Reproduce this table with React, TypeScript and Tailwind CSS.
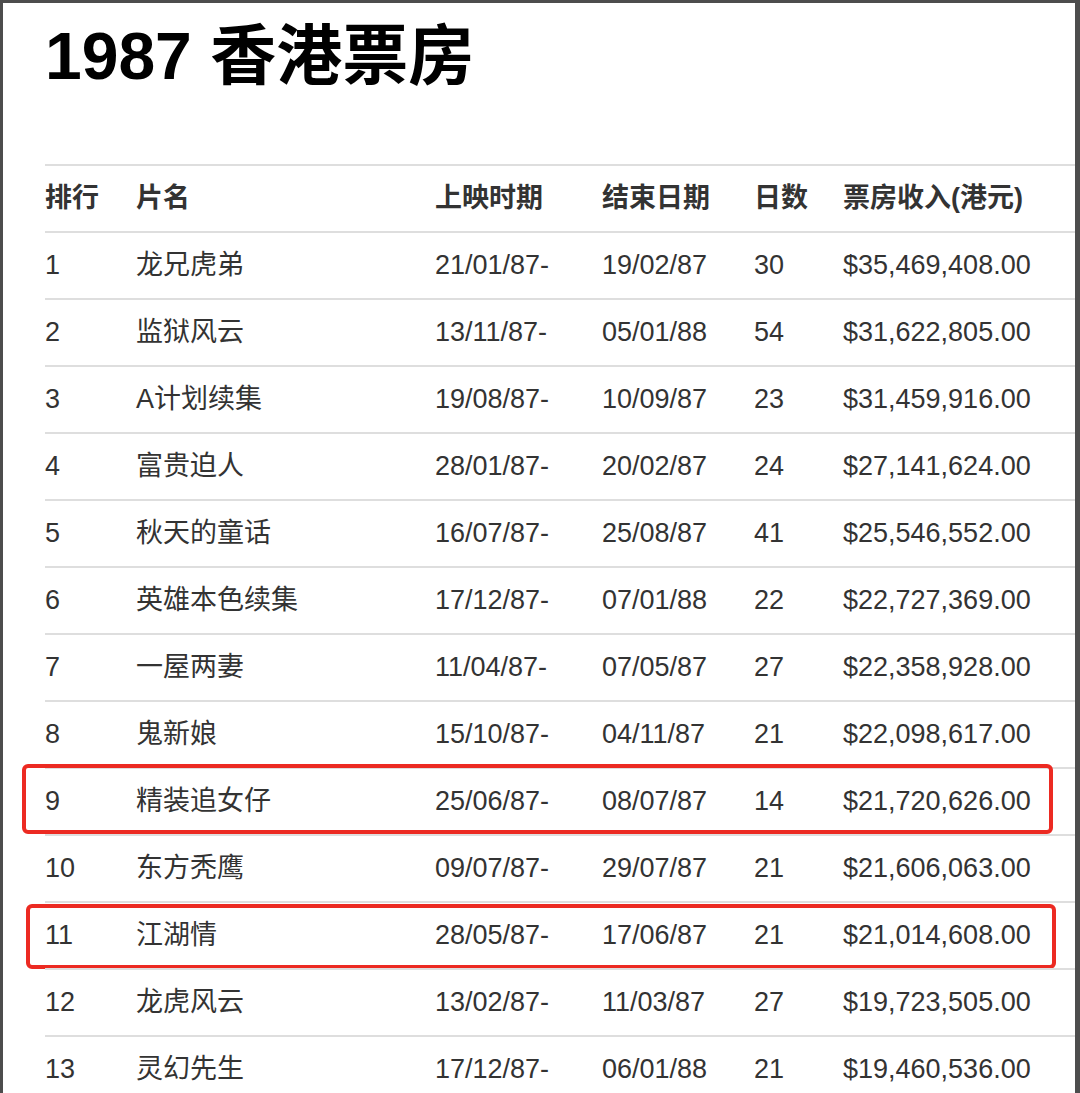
import React from "react";

const rows: [string, string, string, string, string, string][] = [
  ["1", "龙兄虎弟", "21/01/87-", "19/02/87", "30", "$35,469,408.00"],
  ["2", "监狱风云", "13/11/87-", "05/01/88", "54", "$31,622,805.00"],
  ["3", "A计划续集", "19/08/87-", "10/09/87", "23", "$31,459,916.00"],
  ["4", "富贵迫人", "28/01/87-", "20/02/87", "24", "$27,141,624.00"],
  ["5", "秋天的童话", "16/07/87-", "25/08/87", "41", "$25,546,552.00"],
  ["6", "英雄本色续集", "17/12/87-", "07/01/88", "22", "$22,727,369.00"],
  ["7", "一屋两妻", "11/04/87-", "07/05/87", "27", "$22,358,928.00"],
  ["8", "鬼新娘", "15/10/87-", "04/11/87", "21", "$22,098,617.00"],
  ["9", "精装追女仔", "25/06/87-", "08/07/87", "14", "$21,720,626.00"],
  ["10", "东方秃鹰", "09/07/87-", "29/07/87", "21", "$21,606,063.00"],
  ["11", "江湖情", "28/05/87-", "17/06/87", "21", "$21,014,608.00"],
  ["12", "龙虎风云", "13/02/87-", "11/03/87", "27", "$19,723,505.00"],
  ["13", "灵幻先生", "17/12/87-", "06/01/88", "21", "$19,460,536.00"],
];

const font = {
  fontFamily: '"Liberation Sans", Arial, "Noto Sans CJK SC", sans-serif',
};

function Row({ cells, header, box }: { cells: string[]; header?: boolean; box?: number }) {
  return (
    <div
      className={`relative flex h-[67px] items-center border-t-2 border-[#dedede] text-[27px] text-[#333] ${
        header ? "font-bold" : ""
      }`}
    >
      <div className="w-[91px] shrink-0">{cells[0]}</div>
      <div className="w-[299px] shrink-0">{cells[1]}</div>
      <div className="w-[167px] shrink-0">{cells[2]}</div>
      <div className="w-[152px] shrink-0">{cells[3]}</div>
      <div className="w-[89px] shrink-0">{cells[4]}</div>
      <div className="flex-1 whitespace-nowrap">{cells[5]}</div>
      {box === 1 && (
        <div className="pointer-events-none absolute left-[-23px] top-[-5px] h-[70px] w-[1031px] rounded-[6px] border-[4px] border-[#ec2a22]" />
      )}
      {box === 2 && (
        <div className="pointer-events-none absolute left-[-19px] top-[1px] h-[65px] w-[1030px] rounded-[6px] border-[4px] border-[#ec2a22]" />
      )}
    </div>
  );
}

export default function App() {
  return (
    <div
      className="h-[1093px] w-[1080px] overflow-hidden border-l-[3px] border-r-[5px] border-t-[3px] border-[#4d4d4d] bg-white"
      style={font}
    >
      <div className="pl-[42px] pt-[17px]">
        <h1 className="text-[66px] font-bold leading-[72px] text-black">1987 香港票房</h1>
        <div className="mt-[72px]">
          <Row header cells={["排行", "片名", "上映时期", "结束日期", "日数", "票房收入(港元)"]} />
          {rows.map((r, i) => (
            <Row key={i} cells={r} box={r[0] === "9" ? 1 : r[0] === "11" ? 2 : undefined} />
          ))}
        </div>
      </div>
    </div>
  );
}
